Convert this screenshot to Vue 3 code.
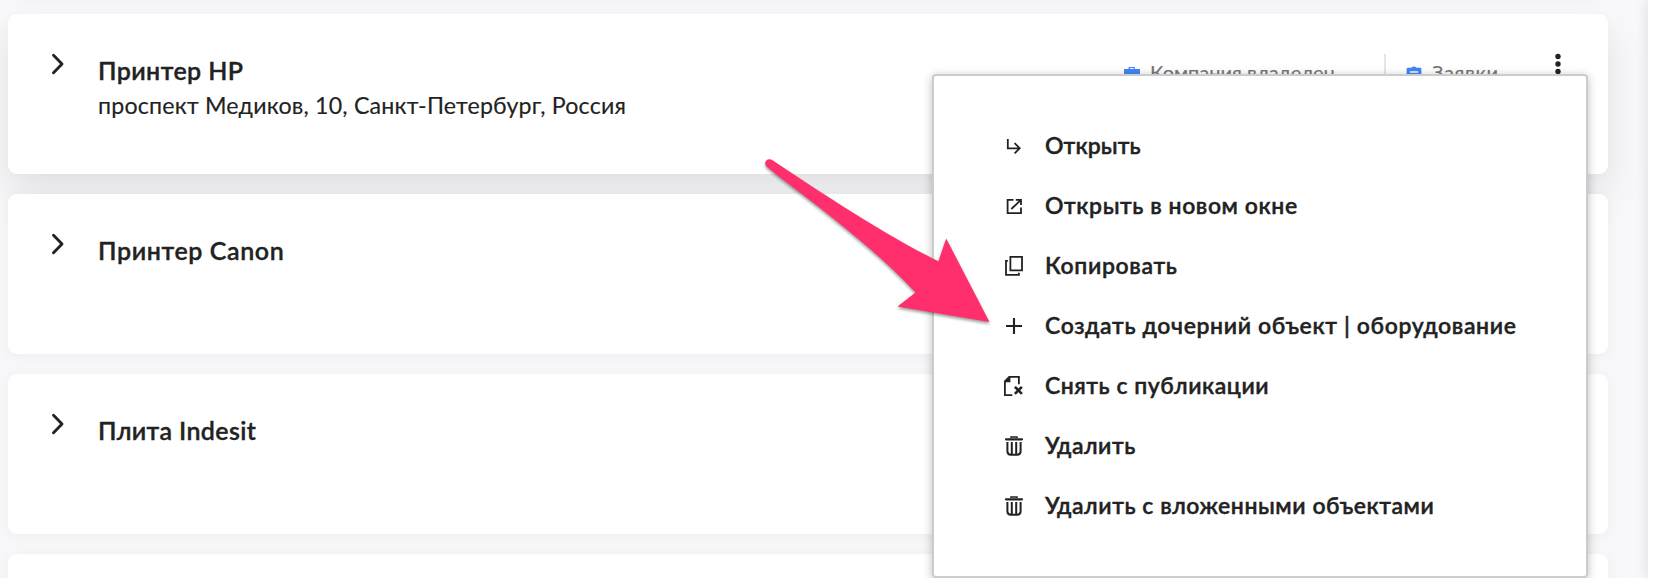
<script setup>
const objects = [
  { title: '', address: '' },
  { title: 'Принтер HP', address: 'проспект Медиков, 10, Санкт-Петербург, Россия', active: true, spacing: 0.4 },
  { title: 'Принтер Canon', address: '', spacing: 0.6 },
  { title: 'Плита Indesit', address: '', spacing: 0.35 },
  { title: '', address: '' },
]

const actions = [
  { icon: 'enter', label: 'Открыть', spacing: 0.1 },
  { icon: 'external', label: 'Открыть в новом окне', spacing: 0.56 },
  { icon: 'copy', label: 'Копировать', spacing: 0.65 },
  { icon: 'plus', label: 'Создать дочерний объект | оборудование', spacing: 0.62 },
  { icon: 'unpublish', label: 'Снять с публикации', spacing: 0.52 },
  { icon: 'trash', label: 'Удалить', spacing: 0.5 },
  { icon: 'trash', label: 'Удалить с вложенными объектами', spacing: 0.54 },
]
</script>

<template>
  <div class="page">
    <main class="list">
      <article v-for="(item, i) in objects" :key="i" class="card" :class="{ active: item.active }">
        <svg class="chevron" viewBox="0 0 24 24" width="24" height="24">
          <path d="M7.5 3.3 16 12 7.5 20.7" />
        </svg>
        <div class="info">
          <h2 :style="{ letterSpacing: item.spacing + 'px' }">{{ item.title }}</h2>
          <p>{{ item.address }}</p>
        </div>
        <div v-if="item.active" class="meta">
          <div class="tag owner">
            <svg viewBox="0 0 16 17" width="16" height="17">
              <path class="fill" d="M0 4.2V3h4.6V.9h6.2V3H16v13H0zM6 2.1V3h3.5v-.9z" fill-rule="evenodd" />
            </svg>
            <span>Компания владелец</span>
          </div>
          <div class="tag requests">
            <svg viewBox="0 0 16 17" width="16" height="17">
              <path class="fill" d="M2 1.8h3.4Q8 -.6 10.6 1.8H14q1.4 0 1.4 1.4V16H.6V3.2Q.6 1.8 2 1.8zM3.8 5.2v1.5h8.4V5.2zM3.8 9v1.5h8.4V9z" fill-rule="evenodd" />
            </svg>
            <span>Заявки</span>
          </div>
          <svg class="dots" viewBox="0 0 8 22" width="8" height="22">
            <circle cx="4" cy="3.5" r="2.7" />
            <circle cx="4" cy="11" r="2.7" />
            <circle cx="4" cy="18.5" r="2.7" />
          </svg>
        </div>
      </article>
    </main>
    <aside class="side"></aside>

    <ul class="menu">
      <li v-for="a in actions" :key="a.label">
        <svg viewBox="0 0 24 24" width="24" height="24">
          <path v-if="a.icon === 'enter'" d="M5.8 5v9.3h11.6M12.6 9.2l5.1 5.1-5.1 5.1" />
          <template v-else-if="a.icon === 'external'">
            <path d="M11.5 5.8H5.6v13.4h13.4v-5.6" />
            <path d="M9.3 15 18.5 6.3M13.8 5.8h5.2v5.2" />
          </template>
          <path v-else-if="a.icon === 'copy'" d="M8.4 2.9H20v13.4H8.4zM5.9 6.8H4v14h12.9v-2" />
          <path v-else-if="a.icon === 'plus'" class="bold" d="M12 4v16M4 12h16" />
          <template v-else-if="a.icon === 'unpublish'">
            <path d="M10.3 21.2H2.9V7.3l4.4-4.4h9.6v7.3" />
            <path class="solid" d="M2.4 8.2V7l4.7-4.6h1.3v5.8z" />
            <path class="cross" d="m12.9 12.8 7 7M19.9 12.8l-7 7" />
          </template>
          <template v-else>
            <path class="handle" d="M9 4V2.9h6V4" />
            <path class="lid" d="M4 5.3h16" />
            <path class="bin" d="M5.4 8v9.3q0 3.4 3.4 3.4h6.4q3.4 0 3.4-3.4V8M9.8 8v12.6M14.2 8v12.6" />
          </template>
        </svg>
        <span :style="{ letterSpacing: a.spacing + 'px' }">{{ a.label }}</span>
      </li>
    </ul>

    <svg class="pointer" viewBox="0 0 240 180" width="240" height="180">
      <path d="M12.5 10.3C60 42 130 88 178.4 111.2L186.2 88.5 229.5 172 137.5 156.5 155.5 142.5C122 106 75 69 17 25L6.5 16.5C2.8 12.5 7.5 7 12.5 10.3Z" />
    </svg>
  </div>
</template>

<style>
body {
  overflow: hidden;
}
</style>

<style scoped>
.page {
  position: relative;
  display: flex;
  height: 578px;
  overflow: hidden;
  background: #f8f8fb;
  color: #222;
  font-family: Lato, "Noto Sans", sans-serif;
}
.list {
  display: flex;
  flex-direction: column;
  gap: 20px;
  width: 1600px;
  margin: -166px 40px 0 8px;
  flex: none;
}
.card {
  display: flex;
  box-sizing: border-box;
  flex: none;
  height: 160px;
  padding: 38px 46px 0 38px;
  border-radius: 9px;
  background: #fff;
  box-shadow: 0 2px 16px rgba(0, 0, 0, 0.05);
}
.card.active {
  box-shadow: 0 20px 40px rgba(0, 0, 0, 0.09), 0 2px 16px rgba(0, 0, 0, 0.02);
}
.chevron {
  flex: none;
}
.chevron path {
  fill: none;
  stroke: #222;
  stroke-width: 2.9;
  stroke-linecap: round;
  stroke-linejoin: round;
}
.info {
  margin: 2px 0 0 28px;
  flex: 1;
}
h2 {
  margin: 0;
  font-size: 25px;
  font-weight: 600;
  line-height: 32px;
  -webkit-text-stroke: 0.35px #222;
}
p {
  margin: 3px 0 0;
  font-size: 23.2px;
  line-height: 32px;
  letter-spacing: 0.19px;
  -webkit-text-stroke: 0.15px #222;
}
.meta {
  display: flex;
  align-items: flex-start;
}
.tag {
  display: flex;
  box-sizing: border-box;
  height: 70px;
  margin-top: 2px;
  padding-top: 12px;
  font-size: 20px;
  line-height: 24px;
  color: #777;
  white-space: nowrap;
}
.tag span {
  margin-top: -6px;
  -webkit-text-stroke: 0.2px #777;
}
.fill {
  fill: #4285f4;
}
.owner {
  width: 260px;
  gap: 10px;
}
.requests {
  width: 170px;
  padding-left: 20px;
  gap: 10px;
  border-left: 2px solid #e6e6e8;
  letter-spacing: 0.6px;
}
.dots {
  margin-top: 1px;
  fill: #222;
}
.side {
  flex: none;
  width: 10px;
  background: #fff;
  box-shadow: 0 0 14px rgba(0, 0, 0, 0.13);
}
.menu {
  position: absolute;
  left: 932px;
  top: 74px;
  box-sizing: border-box;
  width: 656px;
  height: 504px;
  margin: 0;
  padding: 40px 68px;
  border: 2px solid #ccc;
  border-radius: 4px;
  background: #fff;
  box-shadow: 0 2px 10px rgba(0, 0, 0, 0.26);
  list-style: none;
}
li {
  display: flex;
  align-items: center;
  height: 60px;
  gap: 19px;
  font-size: 23px;
  font-weight: 600;
  line-height: 28px;
  white-space: nowrap;
}
li span {
  margin-top: -2px;
  -webkit-text-stroke: 0.4px #222;
}
li svg {
  flex: none;
}
li path {
  fill: none;
  stroke: #222;
  stroke-width: 1.8;
}
li .bold {
  stroke-width: 2.1;
}
li .solid {
  fill: #222;
  stroke: none;
}
li .cross {
  stroke-width: 2.6;
}
li .handle {
  stroke-width: 1.5;
}
li .lid {
  stroke-width: 2.2;
  stroke-linecap: round;
}
li .bin {
  stroke-width: 2;
}
.pointer {
  position: absolute;
  left: 760px;
  top: 150px;
  filter: drop-shadow(0 2px 1.5px rgba(0, 0, 0, 0.4));
}
.pointer path {
  fill: #ff2f6d;
}
</style>
